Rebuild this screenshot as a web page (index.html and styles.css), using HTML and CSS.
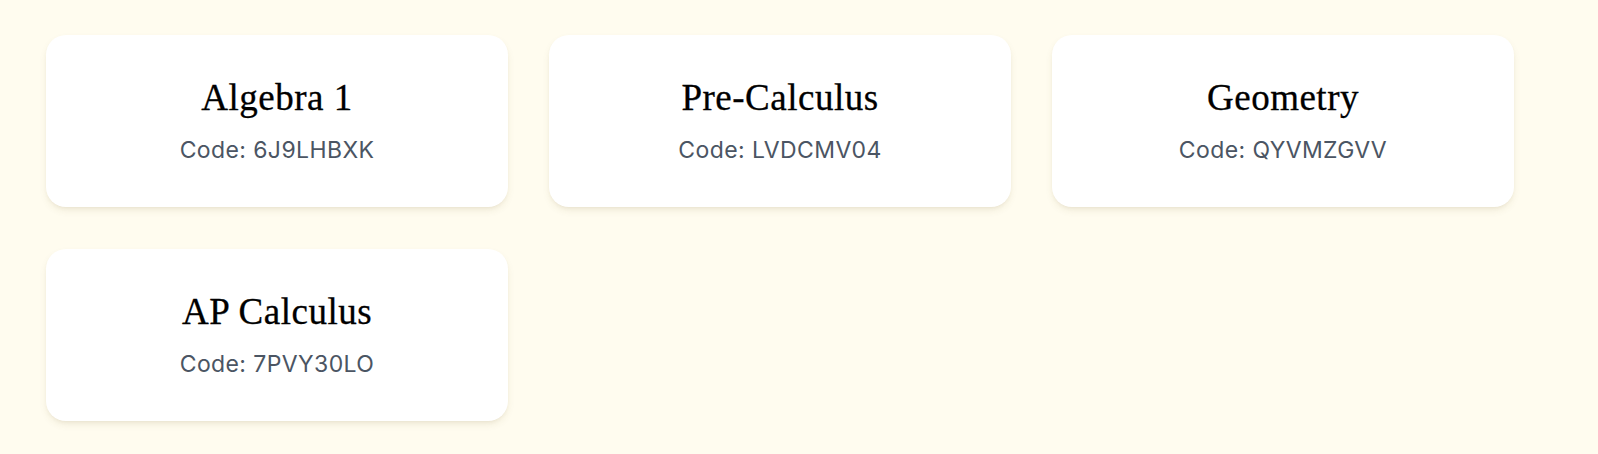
FILE: index.html
```html
<!DOCTYPE html>
<html lang="en">
<head>
<meta charset="utf-8">
<title>Classes</title>
<link rel="stylesheet" href="styles.css">
</head>
<body>
<main class="page">
  <div class="grid">
    <div class="card">
      <h2 class="title">Algebra 1</h2>
      <p class="code">Code: 6J9LHBXK</p>
    </div>
    <div class="card">
      <h2 class="title">Pre-Calculus</h2>
      <p class="code">Code: LVDCMV04</p>
    </div>
    <div class="card">
      <h2 class="title">Geometry</h2>
      <p class="code">Code: QYVMZGVV</p>
    </div>
    <div class="card">
      <h2 class="title">AP Calculus</h2>
      <p class="code">Code: 7PVY30LO</p>
    </div>
  </div>
</main>
</body>
</html>
```
FILE: styles.css
```css
html, body {
  margin: 0;
  padding: 0;
  background: #fffcef;
}

.page {
  padding: 35px 46px;
}

.grid {
  display: grid;
  grid-template-columns: repeat(3, 462px);
  column-gap: 41px;
  row-gap: 42px;
}

.card {
  background: #ffffff;
  border-radius: 20px;
  box-shadow: 0 4px 8px -2px rgba(120, 100, 40, 0.14), 0 2px 4px -2px rgba(120, 100, 40, 0.10);
  padding: 43px 24px;
  display: flex;
  flex-direction: column;
  align-items: center;
  text-align: center;
}

.title {
  margin: 0 0 18px;
  font-family: "Liberation Serif", "DejaVu Serif", serif;
  font-weight: normal;
  font-size: 37px;
  line-height: 40px;
  letter-spacing: 0.5px;
  -webkit-text-stroke: 0.3px #000000;
  color: #000000;
}

.code {
  margin: 0;
  font-family: Inter, "Noto Sans", sans-serif;
  font-size: 23px;
  line-height: 28px;
  letter-spacing: 0.4px;
  color: #4b5563;
}
```
